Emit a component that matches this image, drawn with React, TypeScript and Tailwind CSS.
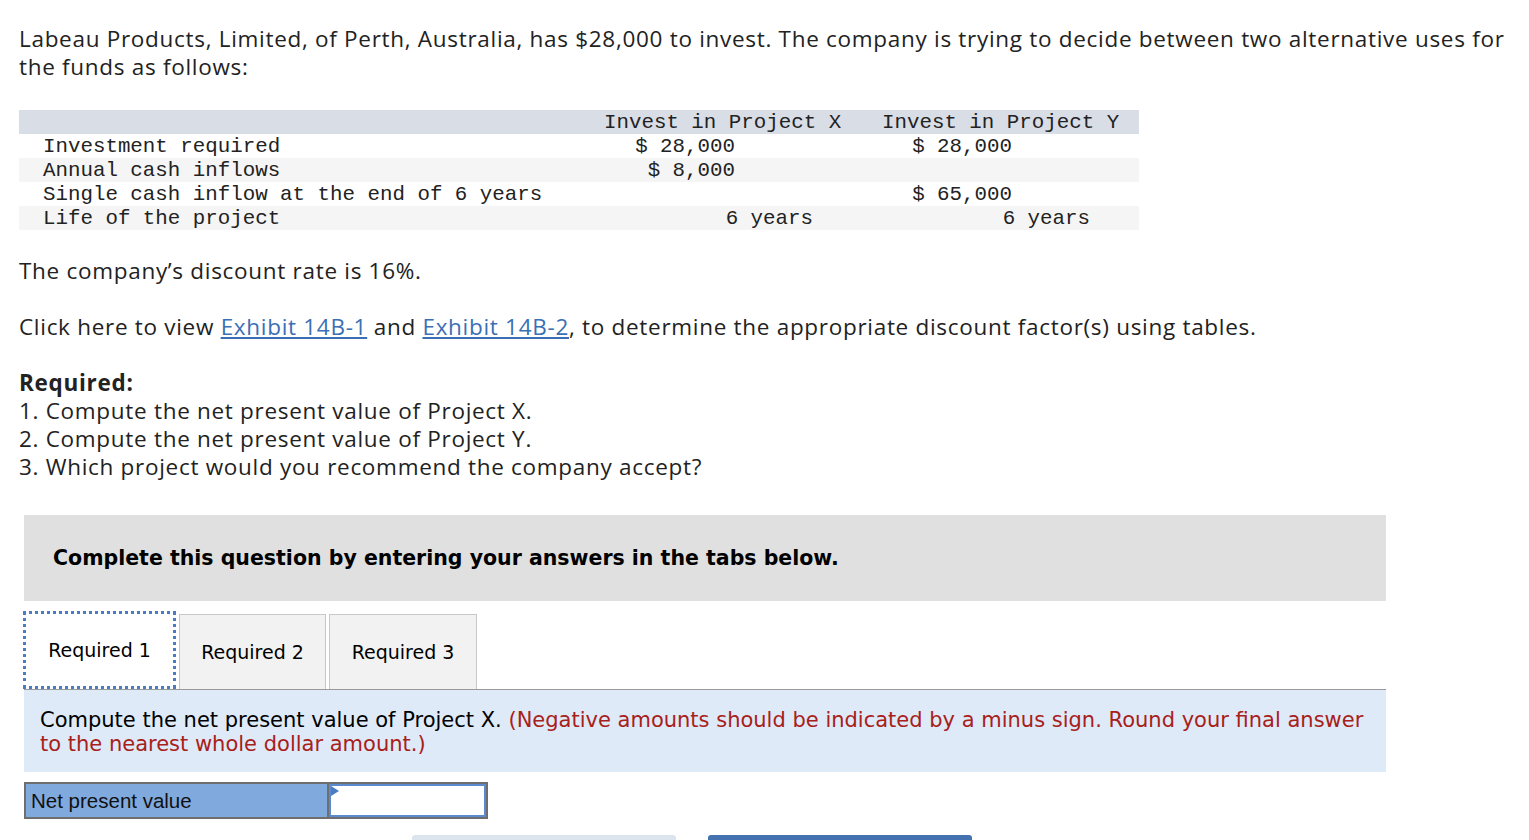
import React from 'react';

const rows = [
  { label: 'Investment required', x: '$ 28,000', y: '$ 28,000', kind: 'money', shade: false },
  { label: 'Annual cash inflows', x: '$ 8,000', y: '', kind: 'money', shade: true },
  { label: 'Single cash inflow at the end of 6 years', x: '', y: '$ 65,000', kind: 'money', shade: false },
  { label: 'Life of the project', x: '6 years', y: '6 years', kind: 'years', shade: true },
];

const ValueCell = ({ value, kind }: { value: string; kind: string }) => (
  <div className="flex">
    <span className={kind === 'years' ? 'w-[223px] text-right' : 'w-[145px] text-right'}>{value}</span>
  </div>
);

const App = () => {
  return (
    <div className="min-h-screen bg-white pl-[19px] pt-[25px] text-[#222] font-['Open_Sans',sans-serif] text-[22.5px] leading-[28px] tracking-[0.7px]">
      <p className="w-[1505px]">
        Labeau Products, Limited, of Perth, Australia, has $28,000 to invest. The company is trying to decide between two
        alternative uses for the funds as follows:
      </p>

      <div className="mt-[29px] w-[1120px] font-['Liberation_Mono',monospace] text-[20.8px] leading-[22px] tracking-normal text-[#222]">
        <div className="grid h-[24px] grid-cols-[571px_277px_272px] bg-[#d9dde6] pt-[2px]">
          <div />
          <div className="pl-[14px]">Invest in Project X</div>
          <div className="pl-[15px]">Invest in Project Y</div>
        </div>
        {rows.map((r) => (
          <div
            key={r.label}
            className={`grid h-[24px] grid-cols-[571px_277px_272px] pt-[2px] ${r.shade ? 'bg-[#f5f5f5]' : 'bg-white'}`}
          >
            <div className="pl-[24px]">{r.label}</div>
            <ValueCell value={r.x} kind={r.kind} />
            <ValueCell value={r.y} kind={r.kind} />
          </div>
        ))}
      </div>

      <p className="mt-[27px]">The company’s discount rate is 16%.</p>
      <p className="mt-[28px]">
        Click here to view{' '}
        <a href="#" className="text-[#3a6fb5] underline">Exhibit 14B-1</a> and{' '}
        <a href="#" className="text-[#3a6fb5] underline">Exhibit 14B-2</a>, to determine the appropriate discount
        factor(s) using tables.
      </p>
      <div className="mt-[28px]">
        <p className="font-bold">Required:</p>
        <p>1. Compute the net present value of Project X.</p>
        <p>2. Compute the net present value of Project Y.</p>
        <p>3. Which project would you recommend the company accept?</p>
      </div>

      <div className="ml-[5px] mt-[34px] w-[1362px] font-['DejaVu_Sans',sans-serif] tracking-normal">
        <div className="flex h-[86px] items-center bg-[#e0e0e0] pl-[29px] text-[20.5px] font-bold text-black">
          Complete this question by entering your answers in the tabs below.
        </div>

        <div className="mt-[10px] flex items-end gap-[3px] text-[19px] text-black">
          <div className="-ml-[1px] flex h-[78px] w-[153px] items-center justify-center border-[3px] border-dotted border-[#4a7cc4] bg-white">
            Required 1
          </div>
          <div className="flex h-[75px] w-[147px] items-center justify-center border border-b-0 border-[#c8c8c8] bg-[#f2f2f2]">
            Required 2
          </div>
          <div className="flex h-[75px] w-[148px] items-center justify-center border border-b-0 border-[#c8c8c8] bg-[#f2f2f2]">
            Required 3
          </div>
        </div>

        <div className="border-t border-[#999] bg-[#deeaf7] px-[16px] pb-[16px] pt-[18px] text-[21px] leading-[24px] text-black">
          Compute the net present value of Project X.{' '}
          <span className="text-[#a8201a]">
            (Negative amounts should be indicated by a minus sign. Round your final answer to the nearest whole dollar
            amount.)
          </span>
        </div>

        <div className="mt-[10px] flex h-[37px] w-[464px] border-2 border-[#6e6e6e] font-['Liberation_Sans',sans-serif]">
          <div className="flex w-[303px] items-center border-r-2 border-[#6e6e6e] bg-[#80a9dd] pl-[5px] text-[20.5px] text-[#111]">
            Net present value
          </div>
          <div className="relative flex-1 border-2 border-[#5b8ad0] bg-white">
            <span className="absolute left-0 top-0 h-0 w-0 border-y-[5px] border-l-[8px] border-y-transparent border-l-[#4a7cc4]" />
          </div>
        </div>

        <div className="mt-[16px] flex gap-[32px] pl-[388px]">
          <div className="h-[10px] w-[264px] rounded-t-[3px] bg-[#dce4ee]" />
          <div className="h-[10px] w-[264px] rounded-t-[3px] bg-[#4472b0]" />
        </div>
      </div>
    </div>
  );
};

export default App;
